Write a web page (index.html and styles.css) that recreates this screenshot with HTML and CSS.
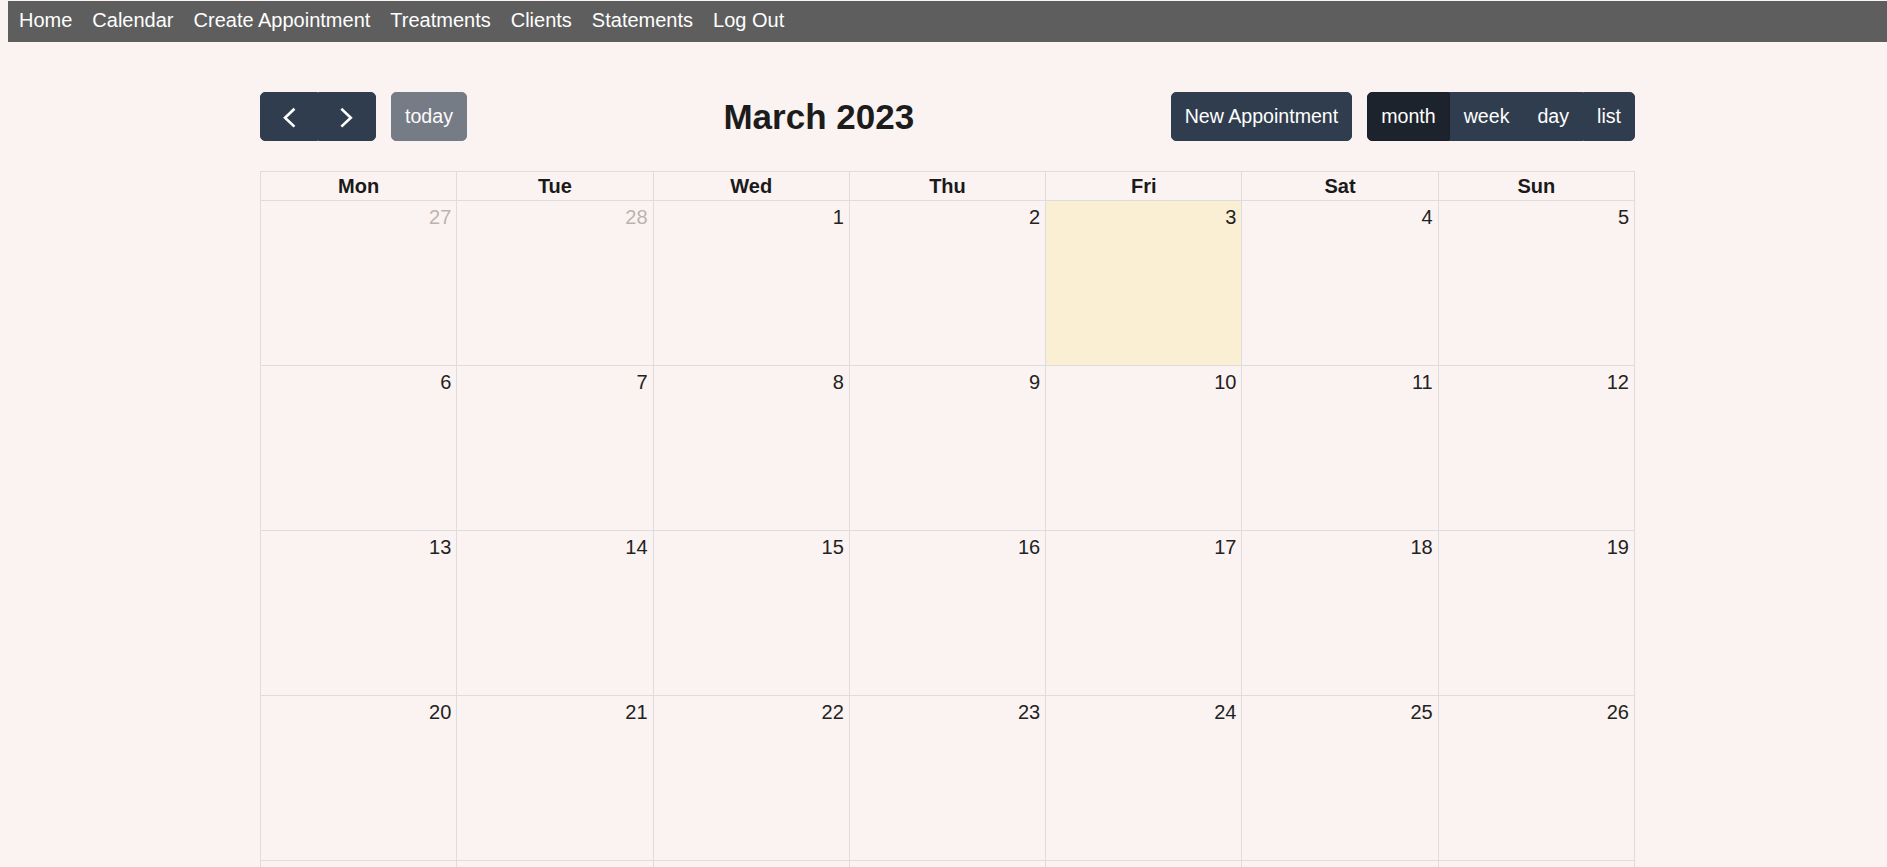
FILE: index.html
```html
<!DOCTYPE html>
<html lang="en">
<head>
<meta charset="utf-8">
<title>Calendar</title>
<link rel="stylesheet" href="styles.css">
</head>
<body>
<nav class="topnav">
  <a href="#">Home</a>
  <a href="#">Calendar</a>
  <a href="#">Create Appointment</a>
  <a href="#">Treatments</a>
  <a href="#">Clients</a>
  <a href="#">Statements</a>
  <a href="#">Log Out</a>
</nav>
<main class="page">
  <div class="calendar">
    <div class="toolbar">
      <div class="chunk">
        <div class="btn-group">
          <button class="btn btn-icon" aria-label="prev">
            <svg class="chev" viewBox="0 0 30 30" width="30" height="30"><path d="M19.5 8.7 L11 16.7 L19.5 24.7"/></svg>
          </button>
          <button class="btn btn-icon" aria-label="next">
            <svg class="chev" viewBox="0 0 30 30" width="30" height="30"><path d="M10.3 8.7 L18.8 16.7 L10.3 24.7"/></svg>
          </button>
        </div>
        <button class="btn btn-today" disabled>today</button>
      </div>
      <h2 class="title">March 2023</h2>
      <div class="chunk">
        <button class="btn">New Appointment</button>
        <div class="btn-group">
          <button class="btn active">month</button>
          <button class="btn">week</button>
          <button class="btn">day</button>
          <button class="btn">list</button>
        </div>
      </div>
    </div>
    <div class="grid">
      <div class="head">Mon</div>
      <div class="head">Tue</div>
      <div class="head">Wed</div>
      <div class="head">Thu</div>
      <div class="head">Fri</div>
      <div class="head">Sat</div>
      <div class="head">Sun</div>

      <div class="day other"><span class="num">27</span></div>
      <div class="day other"><span class="num">28</span></div>
      <div class="day"><span class="num">1</span></div>
      <div class="day"><span class="num">2</span></div>
      <div class="day today"><span class="num">3</span></div>
      <div class="day"><span class="num">4</span></div>
      <div class="day"><span class="num">5</span></div>

      <div class="day"><span class="num">6</span></div>
      <div class="day"><span class="num">7</span></div>
      <div class="day"><span class="num">8</span></div>
      <div class="day"><span class="num">9</span></div>
      <div class="day"><span class="num">10</span></div>
      <div class="day"><span class="num">11</span></div>
      <div class="day"><span class="num">12</span></div>

      <div class="day"><span class="num">13</span></div>
      <div class="day"><span class="num">14</span></div>
      <div class="day"><span class="num">15</span></div>
      <div class="day"><span class="num">16</span></div>
      <div class="day"><span class="num">17</span></div>
      <div class="day"><span class="num">18</span></div>
      <div class="day"><span class="num">19</span></div>

      <div class="day"><span class="num">20</span></div>
      <div class="day"><span class="num">21</span></div>
      <div class="day"><span class="num">22</span></div>
      <div class="day"><span class="num">23</span></div>
      <div class="day"><span class="num">24</span></div>
      <div class="day"><span class="num">25</span></div>
      <div class="day"><span class="num">26</span></div>

      <div class="day"><span class="num">27</span></div>
      <div class="day"><span class="num">28</span></div>
      <div class="day"><span class="num">29</span></div>
      <div class="day"><span class="num">30</span></div>
      <div class="day"><span class="num">31</span></div>
      <div class="day other"><span class="num">1</span></div>
      <div class="day other"><span class="num">2</span></div>

      <div class="day other"><span class="num">3</span></div>
      <div class="day other"><span class="num">4</span></div>
      <div class="day other"><span class="num">5</span></div>
      <div class="day other"><span class="num">6</span></div>
      <div class="day other"><span class="num">7</span></div>
      <div class="day other"><span class="num">8</span></div>
      <div class="day other"><span class="num">9</span></div>
    </div>
  </div>
</main>
</body>
</html>
```

FILE: styles.css
```css
html, body {
  margin: 0;
  padding: 0;
}

body {
  background: #fbf3f1;
  font-family: "Liberation Sans", Arial, sans-serif;
  font-size: 20px;
  color: #222;
}

.topnav {
  display: flex;
  margin: 1px 0 0 8px;
  padding: 8px 0 10px 1px;
  background: #5e5e5e;
  line-height: 23px;
}

.topnav a {
  color: #fff;
  text-decoration: none;
  padding: 0 10px;
  font-size: 20px;
}

.page {
  padding: 50px 0 0 8px;
}

.calendar {
  width: 1375px;
  margin: 0 auto;
}

.toolbar {
  display: flex;
  justify-content: space-between;
  align-items: center;
  margin-bottom: 30px;
}

.chunk {
  display: flex;
  align-items: center;
  gap: 15px;
}

.title {
  margin: 0;
  font-size: 35px;
  font-weight: bold;
  color: #1c1c1c;
  line-height: 40px;
}

.btn-group {
  display: flex;
}

.btn {
  font-family: "Liberation Sans", Arial, sans-serif;
  font-size: 19.6px;
  line-height: 30px;
  padding: 8px 13px 9px;
  color: #fff;
  background: #303d4e;
  border: 1px solid #303d4e;
  border-radius: 5px;
  cursor: pointer;
}

.btn-group .btn {
  border-radius: 0;
}

.btn-group .btn:first-child {
  border-top-left-radius: 5px;
  border-bottom-left-radius: 5px;
}

.btn-group .btn:last-child {
  border-top-right-radius: 5px;
  border-bottom-right-radius: 5px;
}

.btn.active {
  background: #1c232d;
  border-color: #1a2029;
}

.btn-icon {
  display: flex;
  align-items: center;
}

.chev {
  display: block;
  fill: none;
  stroke: #fff;
  stroke-width: 2.6;
  stroke-linecap: square;
  stroke-linejoin: miter;
}

.btn-today {
  opacity: 0.65;
  cursor: default;
}

.grid {
  display: grid;
  grid-template-columns: repeat(7, 1fr);
  border-top: 1px solid #ddd;
  border-left: 1px solid #ddd;
}

.head {
  border-right: 1px solid #ddd;
  border-bottom: 1px solid #ddd;
  padding: 3px 5px 2px;
  text-align: center;
  font-weight: bold;
  line-height: 23px;
  color: #1a1a1a;
}

.day {
  box-sizing: border-box;
  height: 165px;
  border-right: 1px solid #ddd;
  border-bottom: 1px solid #ddd;
  display: flex;
  justify-content: flex-end;
  align-items: flex-start;
}

.day.today {
  background: rgba(255, 220, 40, 0.15);
}

.num {
  padding: 5px;
  line-height: 23px;
  color: #222;
}

.day.other .num {
  opacity: 0.3;
}
```
